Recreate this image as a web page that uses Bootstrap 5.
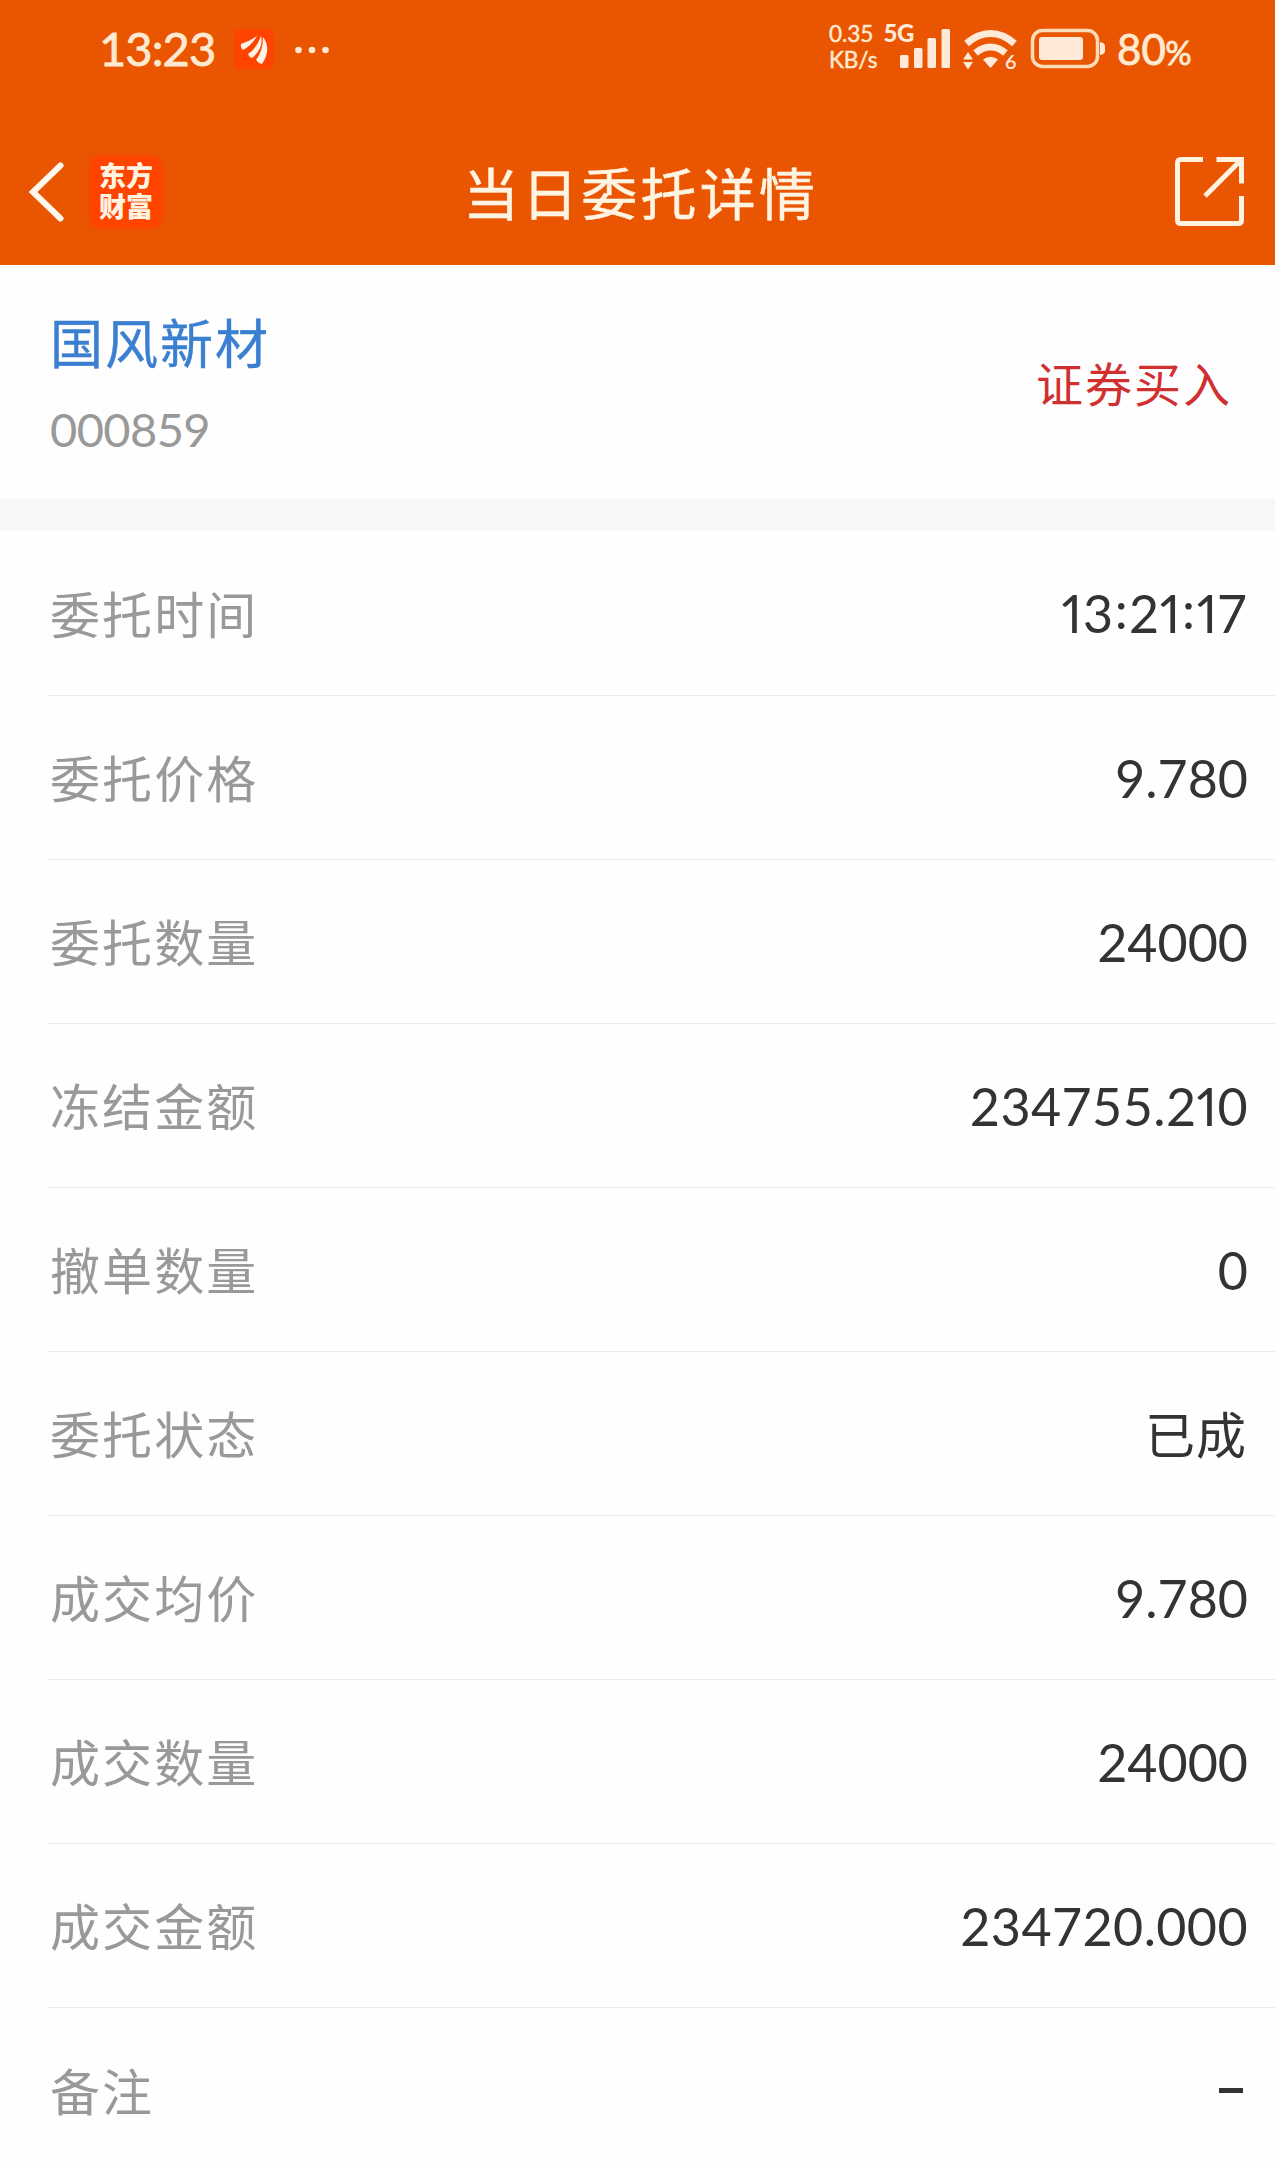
<!DOCTYPE html>
<html lang="zh-CN">
<head>
<meta charset="utf-8">
<meta name="viewport" content="width=device-width, initial-scale=1">
<title>当日委托详情</title>
<link rel="stylesheet" href="https://cdn.jsdelivr.net/npm/bootstrap@5.3.0/dist/css/bootstrap.min.css">
<style>
  body { font-family: Lato, "Noto Sans CJK SC", sans-serif; background: #fefefe; color: #333; line-height: 1; overflow-x: hidden; }
  svg { display: block; flex: none; overflow: visible; }
  .app-top { background: #e95500; color: #fff3e2; height: 265px; }
  .status-bar { height: 97px; padding-left: 99px; padding-right: 83px; color: #ffe9d0; }
  .clock { font-size: 47px; width: 135px; letter-spacing: -.9px; -webkit-text-stroke: .8px; }
  .net-speed { font-size: 22.5px; line-height: 26px; width: 56px; padding-bottom: 4px; -webkit-text-stroke: .5px; }
  .battery-level { font-size: 42px; margin-left: 8px; letter-spacing: .3px; -webkit-text-stroke: .8px; }
  .battery-level span { font-size: 33px; margin-left: -1px; }
  .title-bar { height: 168px; padding: 22px 31px 0 28px; }
  .title-bar h1 { font-size: 56px; font-weight: 400; letter-spacing: 3.2px; line-height: 1; padding: 4px 0 0 9px; -webkit-text-stroke: .5px; }
  .brand-tile { width: 72px; height: 72px; margin-left: 26px; border-radius: 12px; background: #ff4400; box-shadow: 0 0 4px #ff4400; font-size: 27px; font-weight: 900; line-height: 31px; padding-bottom: 2px; }
  .side { width: 140px; }
  .stock { height: 234px; padding: 6px 43px 0 50px; }
  .stock-name { font-size: 53px; letter-spacing: 2px; color: #3a7fd0; -webkit-text-stroke: .4px; }
  .stock-code { font-size: 47px; letter-spacing: -.6px; color: #999; margin-top: 36px; }
  .direction { font-size: 47px; letter-spacing: 2px; color: #d03030; padding-bottom: 2px; }
  .band { height: 32px; background: #f6f7f9; }
  .detail-list { --bs-list-group-bg: transparent; --bs-list-group-border-color: #ececec; padding-left: 48px; }
  .detail-list .list-group-item { height: 164px; padding: 0 28px 0 2px; border-width: 0 0 1px; border-radius: 0; }
  .detail-list .list-group-item:first-child { height: 165px; }
  .detail-list .list-group-item:last-child { border: 0; height: 160px; padding-top: 5px; }
  .item-label { font-size: 50px; letter-spacing: 2.1px; color: #999; padding-top: 3px; }
  .item-value { font-size: 52px; color: #333; font-kerning: none; margin-right: -1px; }
  .item-value.amount { letter-spacing: .4px; }
  .item-value.clock-time { font-feature-settings: "pnum"; letter-spacing: 1.1px; margin-right: 0; }
  .item-value .colon { vertical-align: 4px; line-height: 0; margin: 0 .5px; }
  .item-value .slim { font-feature-settings: "pnum"; }
  .item-value.han { font-size: 50px; letter-spacing: 1px; padding-top: 3px; margin-right: 0; }
  .dash { width: 24px; height: 5px; background: #333; margin-right: 4px; }
</style>
<script src="https://cdn.jsdelivr.net/npm/bootstrap@5.3.0/dist/js/bootstrap.bundle.min.js"></script>
</head>
<body>
<header class="app-top">
  <div class="status-bar d-flex align-items-center">
    <div class="clock">13:23</div>
    <svg width="100" height="40" viewBox="234 27 100 40">
      <rect x="234" y="27" width="40" height="40" rx="5" fill="#ff4400"/>
      <g fill="#fff3e6">
        <path d="M241 42Q250 39 257 34Q252 43 243 48Q240 45 241 42Z"/>
        <path d="M248 52Q257 46 261 34Q264 46 252 56Q249 55 248 52Z"/>
        <path d="M256 58Q263 49 263 35Q272 47 262 62Q258 61 256 58Z"/>
      </g>
      <g fill="#ffe9d0"><circle cx="298.500" cy="48" r="3.300"/><circle cx="312" cy="48" r="3.300"/><circle cx="325.500" cy="48" r="3.300"/></g>
    </svg>
    <div class="net-speed ms-auto">0.35<br>KB/s</div>
    <svg width="224" height="60" viewBox="886 18 224 60" fill="#ffe9d8">
      <text x="884.500" y="41" font-size="24" font-weight="900" letter-spacing="-.5">5G</text>
      <rect x="901" y="54" width="8.500" height="13" rx="1.500"/>
      <rect x="915" y="47" width="8.500" height="20" rx="1.500"/>
      <rect x="928.500" y="37" width="8.500" height="30" rx="1.500"/>
      <rect x="942.500" y="28" width="8.500" height="39" rx="1.500"/>
      <g fill="none" stroke="#ffe9d8" stroke-width="7">
        <path d="M967.500 42.500Q979 32.500 991.500 32.500T1015.500 42.500"/>
        <path d="M976.500 52Q983.500 46 991.500 46T1006.500 52"/>
      </g>
      <path d="M984 58.500Q991.500 53 999 58.500L992.500 66Q991.500 67 990.500 66Z"/>
      <path d="M964 58.500L969 51L974 58.500ZM964 61L969 68.500L974 61Z"/>
      <text x="1006" y="68" font-size="20" font-weight="600">6</text>
      <rect x="1033.500" y="29.500" width="65" height="36" rx="10" fill="none" stroke="#ffdcb8" stroke-width="3.500"/>
      <rect x="1040" y="36" width="44" height="23" rx="3"/>
      <path d="M1101 41Q1106 42 1106 45V50Q1106 53 1101 54Z"/>
    </svg>
    <div class="battery-level">80<span>%</span></div>
  </div>
  <div class="title-bar d-flex align-items-center justify-content-between">
    <div class="side d-flex align-items-center">
      <svg width="36" height="62" viewBox="28 161 36 62"><path d="M60.500 165.500L33 192L60.500 218.500" fill="none" stroke="#fff8ec" stroke-width="6" stroke-linecap="round"/></svg>
      <div class="brand-tile d-flex align-items-center justify-content-center text-center">东方<br>财富</div>
    </div>
    <h1 class="mb-0">当日委托详情</h1>
    <div class="side d-flex justify-content-end">
      <svg width="69" height="69" viewBox="1175 158 69 69" fill="none" stroke="#fff3e0" stroke-width="5">
        <path d="M1203 159.500H1181Q1177.500 159.500 1177.500 163V220Q1177.500 223.500 1181 223.500H1238Q1241.500 223.500 1241.500 220V196M1216.500 159.500H1241.500V183.500M1241 160L1205 196"/>
      </svg>
    </div>
  </div>
</header>
<main>
  <section class="stock d-flex align-items-center justify-content-between">
    <div>
      <div class="stock-name">国风新材</div>
      <div class="stock-code">000859</div>
    </div>
    <div class="direction">证券买入</div>
  </section>
  <div class="band"></div>
  <ul class="detail-list list-group list-group-flush">
    <li class="list-group-item d-flex align-items-center justify-content-between"><span class="item-label">委托时间</span><span class="item-value clock-time">13<span class="colon">:</span>21<span class="colon">:</span>17</span></li>
    <li class="list-group-item d-flex align-items-center justify-content-between"><span class="item-label">委托价格</span><span class="item-value">9.780</span></li>
    <li class="list-group-item d-flex align-items-center justify-content-between"><span class="item-label">委托数量</span><span class="item-value">24000</span></li>
    <li class="list-group-item d-flex align-items-center justify-content-between"><span class="item-label">冻结金额</span><span class="item-value amount">234755.2<span class="slim">1</span>0</span></li>
    <li class="list-group-item d-flex align-items-center justify-content-between"><span class="item-label">撤单数量</span><span class="item-value">0</span></li>
    <li class="list-group-item d-flex align-items-center justify-content-between"><span class="item-label">委托状态</span><span class="item-value han">已成</span></li>
    <li class="list-group-item d-flex align-items-center justify-content-between"><span class="item-label">成交均价</span><span class="item-value">9.780</span></li>
    <li class="list-group-item d-flex align-items-center justify-content-between"><span class="item-label">成交数量</span><span class="item-value">24000</span></li>
    <li class="list-group-item d-flex align-items-center justify-content-between"><span class="item-label">成交金额</span><span class="item-value amount">234720.000</span></li>
    <li class="list-group-item d-flex align-items-center justify-content-between"><span class="item-label">备注</span><span class="dash"></span></li>
  </ul>
</main>
</body>
</html>
